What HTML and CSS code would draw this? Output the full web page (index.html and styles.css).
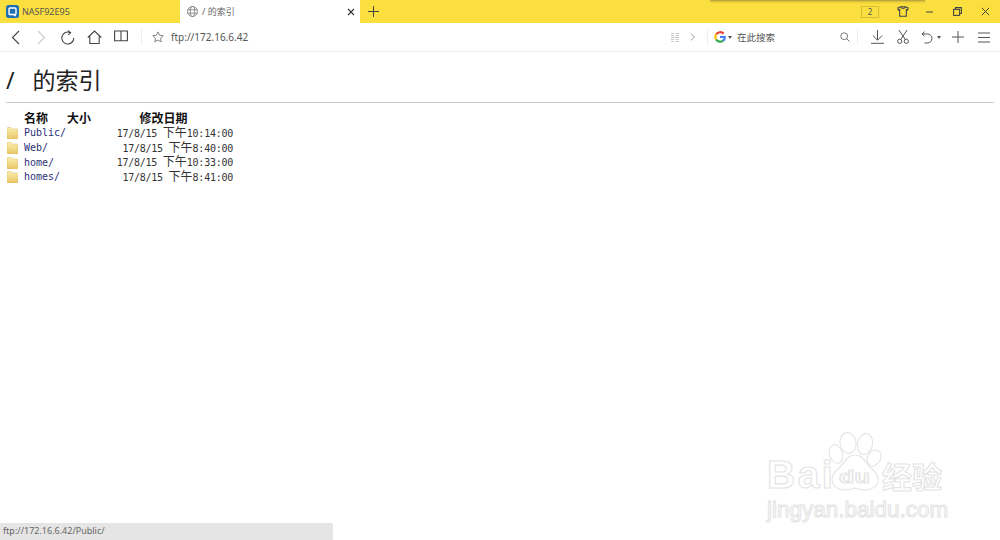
FILE: index.html
```html
<!DOCTYPE html>
<html lang="zh-CN">
<head>
<meta charset="utf-8">
<title>/ 的索引</title>
<link rel="stylesheet" href="styles.css">
</head>
<body>
<div class="shadow-strip"></div>
<header class="tabbar">
  <div class="tab">
    <svg class="tab-logo" width="13" height="13" viewBox="0 0 13 13"><rect width="13" height="13" rx="2.5" fill="#1f6fb5"/><rect x="3" y="3" width="7" height="6.5" rx="1" fill="none" stroke="#fff" stroke-width="1.4"/><path d="M7 9.5l3 1.5" stroke="#fff" stroke-width="1.2"/></svg>
    <span>NASF92E95</span>
  </div>
  <div class="tab tab-active">
    <svg width="11" height="11" viewBox="0 0 11 11" fill="none" stroke="#777" stroke-width=".8"><circle cx="5.5" cy="5.5" r="5"/><ellipse cx="5.5" cy="5.5" rx="2.2" ry="5"/><path d="M.6 3.8h9.8M.6 7.2h9.8"/></svg>
    <span class="tab-title">/ 的索引</span>
    <svg class="tab-close" width="8" height="8" viewBox="0 0 8 8" stroke="#333" stroke-width="1.1"><path d="M1 1l6 6M7 1L1 7"/></svg>
  </div>
  <div class="newtab"><svg width="11" height="11" viewBox="0 0 11 11" stroke="#444" stroke-width="1"><path d="M5.500 0v11M0 5.500h11"/></svg></div>
  <div class="winctl">
    <span class="count">2</span>
    <svg class="ctl-shirt" width="12" height="11" viewBox="0 0 12 11" fill="none" stroke="#444" stroke-width="1.100"><path d="M3.500.7h5L11.300 2 10.500 4 9.300 3.600V10.300H2.700V3.600L1.500 4 .7 2zM3.500.7C4 3 8 3 8.500.7"/></svg>
    <svg class="ctl" width="9" height="9" viewBox="0 0 9 9" stroke="#444"><path d="M1 5h7"/></svg>
    <svg class="ctl" width="9" height="9" viewBox="0 0 9 9" fill="none" stroke="#444" stroke-width="1.100"><rect x=".6" y="2.400" width="6" height="6" fill="#fbdf3f"/><path d="M2.500 2.200V.6H8.400V6.500H6.800"/></svg>
    <svg class="ctl ctl-last" width="9" height="9" viewBox="0 0 9 9" stroke="#444"><path d="M.8.8l7.400 7.400M8.200.8L.8 8.200"/></svg>
  </div>
</header>

<nav class="toolbar">
  <div class="nav-btns">
    <span class="slot"><svg width="9" height="15" viewBox="0 0 9 15" fill="none" stroke="#444" stroke-width="1.100"><path d="M8 1L1.500 7.500 8 14"/></svg></span>
    <span class="slot"><svg width="9" height="15" viewBox="0 0 9 15" fill="none" stroke="#ccc" stroke-width="1.100"><path d="M1 1l6.500 6.500L1 14"/></svg></span>
    <span class="slot"><svg width="14" height="15" viewBox="0 0 14 15" fill="none" stroke="#444" stroke-width="1.100"><path d="M9.200 2.500A6 6 0 1 0 12.800 8"/><path d="M6.700.6l2.900 2-2.400 2.300" /></svg></span>
    <span class="slot"><svg width="15" height="14" viewBox="0 0 15 14" fill="none" stroke="#444" stroke-width="1.100"><path d="M.8 7.500L7.500 1l6.700 6.500M2.800 6.500v7h9.400v-7"/></svg></span>
    <span class="slot"><svg width="14" height="12" viewBox="0 0 14 12" fill="none" stroke="#444" stroke-width="1.100"><path d="M.6 1H7V10.800H.6zM7 1h6.400V10.800H7z"/></svg></span>
  </div>
  <span class="divider"></span>
  <svg class="star" width="12" height="12" viewBox="0 0 12 12" fill="none" stroke="#777" stroke-width=".9"><path d="M6 .9l1.600 3.300 3.600.5-2.600 2.500.6 3.600L6 9.100l-3.200 1.700.6-3.600L.8 4.700l3.600-.5z"/></svg>
  <span class="url">ftp://172.16.6.42</span>

  <div class="tools">
    <svg class="qr" width="8" height="9" viewBox="0 0 8 9" fill="none" stroke="#bbb" stroke-width=".8"><path d="M0 .5h3.200M4.800 .5H8M0 2.500h3.200M4.800 2.500H8M0 4.500h8M0 6.500h3.200M4.800 6.500H8M0 8.500h3.200M4.800 8.500H8"/></svg>
    <svg class="chev" width="5" height="8" viewBox="0 0 5 8" fill="none" stroke="#999"><path d="M1 .6L4.300 4 1 7.400"/></svg>
    <span class="divider divider-search"></span>
    <svg class="google" width="12" height="12" viewBox="0 0 12 12" fill="none" stroke-width="2.200"><path d="M9.600 2.600A4.800 4.800 0 0 0 2.200 3.400" stroke="#e94235"/><path d="M2.200 3.400a4.800 4.800 0 0 0 0 5.200" stroke="#fabb05"/><path d="M2.200 8.600a4.800 4.800 0 0 0 7 1" stroke="#34a853"/><path d="M9.200 9.600C10.300 8.700 10.800 7.500 10.800 6H6" stroke="#4285f4"/></svg>
    <span class="caret"></span>
    <span class="search-text">在此搜索</span>
    <svg class="mag" width="10" height="10" viewBox="0 0 10 10" fill="none" stroke="#666" stroke-width=".9"><circle cx="4.200" cy="4.200" r="3.400"/><path d="M6.700 6.700L9.500 9.500"/></svg>
    <span class="divider divider-tools"></span>
    <svg class="t-down" width="13" height="14" viewBox="0 0 13 14" fill="none" stroke="#555" stroke-width="1"><path d="M6.500 0v10M1.800 5.500l4.700 4.700 4.700-4.700M0 13.300h13"/></svg>
    <svg class="t-cut" width="12" height="14" viewBox="0 0 12 14" fill="none" stroke="#555" stroke-width="1"><circle cx="2.700" cy="11.300" r="2.100"/><circle cx="9.300" cy="11.300" r="2.100"/><path d="M3.800 9.500L10 0M8.200 9.500L2 0"/></svg>
    <svg class="t-undo" width="12" height="13" viewBox="0 0 12 13" fill="none" stroke="#555" stroke-width="1"><path d="M1 3h5.500a4.500 4.500 0 0 1 0 9H3.500M3.500.6L1 3l2.500 2.400"/></svg>
    <span class="caret caret-undo"></span>
    <svg class="t-plus" width="12" height="12" viewBox="0 0 12 12" stroke="#555"><path d="M6 0v12M0 6h12"/></svg>
    <svg class="t-menu" width="12" height="11" viewBox="0 0 12 11" stroke="#555"><path d="M0 1h12M0 5.500h12M0 10h12"/></svg>
  </div>
</nav>

<main class="listing">
  <h1>/ 的索引</h1>
  <hr>
  <table>
    <colgroup><col class="w-name"><col class="w-size"><col class="w-date"></colgroup>
    <thead>
      <tr><th class="c-name">名称</th><th class="c-size">大小</th><th class="c-date">修改日期</th></tr>
    </thead>
    <tbody>
      <tr><td><div class="entry"><svg class="folder" width="11" height="12" viewBox="0 0 11 12"><use href="#fold"/></svg><a href="#">Public/</a></div></td><td></td><td class="c-date">17/8/15 <span class="cjk">下午</span>10:14:00</td></tr>
      <tr><td><div class="entry"><svg class="folder" width="11" height="12" viewBox="0 0 11 12"><use href="#fold"/></svg><a href="#">Web/</a></div></td><td></td><td class="c-date">17/8/15 <span class="cjk">下午</span>8:40:00</td></tr>
      <tr><td><div class="entry"><svg class="folder" width="11" height="12" viewBox="0 0 11 12"><use href="#fold"/></svg><a href="#">home/</a></div></td><td></td><td class="c-date">17/8/15 <span class="cjk">下午</span>10:33:00</td></tr>
      <tr><td><div class="entry"><svg class="folder" width="11" height="12" viewBox="0 0 11 12"><use href="#fold"/></svg><a href="#">homes/</a></div></td><td></td><td class="c-date">17/8/15 <span class="cjk">下午</span>8:41:00</td></tr>
    </tbody>
  </table>
</main>

<svg class="defs" width="0" height="0">
  <defs>
    <linearGradient id="fg" x1="0" y1="0" x2="0" y2="1"><stop offset="0" stop-color="#fbeeb0"/><stop offset="1" stop-color="#e9c565"/></linearGradient>
    <symbol id="fold" viewBox="0 0 11 12"><path d="M0 1.500Q0 .5 1 .5H4L5 2H10Q11 2 11 3V11Q11 12 10 12H1Q0 12 0 11z" fill="url(#fg)" stroke="#dcb95a" stroke-width=".5"/></symbol>
  </defs>
</svg>

<svg class="watermark" width="190" height="110" viewBox="0 0 190 110">
  <g fill="#fff" stroke="#e4e4e4" stroke-width="1.100">
    <ellipse cx="72" cy="32" rx="6.500" ry="9.500" transform="rotate(-20 72 32)"/>
    <ellipse cx="84" cy="21" rx="8" ry="10.500" transform="rotate(-8 84 21)"/>
    <ellipse cx="101" cy="22" rx="7.500" ry="10.500" transform="rotate(12 101 22)"/>
    <ellipse cx="110" cy="36" rx="6.500" ry="8.500" transform="rotate(30 110 36)"/>
    <path d="M91 33C99 33 101 40 106 45 113 51 116 57 113 62 109 69 99 69 91 66 83 69 73 69 69 62 66 56 70 50 76 45 81 40 83 33 91 33z"/>
    <text class="wm-bai" x="3" y="66">Bai</text>
    <text class="wm-du" transform="translate(75 61) scale(1.4 1)">du</text>
    <text class="wm-cn" x="118" y="66">经验</text>
    <text class="wm-url" x="3" y="95">jingyan.baidu.com</text>
  </g>
</svg>

<footer class="status">ftp://172.16.6.42/Public/</footer>
</body>
</html>
```
FILE: styles.css
```css
* { box-sizing: border-box; }
html, body { margin: 0; height: 540px; overflow: hidden; background: #fff; }
body { font-family: "Noto Sans", "Noto Sans CJK SC", sans-serif; color: #333; position: relative; }
svg { display: block; flex: none; }

.tabbar { display: flex; height: 23px; background: #fbdf3f; align-items: stretch; }
.tab { width: 180px; display: flex; align-items: center; font-size: 9px; color: #555; padding-left: 6px; gap: 3px; }
.tab-logo { margin-top: -1px; }
.tab-active { background: #fff; padding-left: 7px; gap: 4px; color: #666; }
.tab-title { flex: 1; }
.tab-close { margin-right: 5px; }
.newtab { width: 26px; display: flex; align-items: center; justify-content: center; }
.winctl { margin-left: auto; display: flex; align-items: center; }
.count { width: 18px; height: 12px; border: 1px solid #d9bd34; font-size: 8px; line-height: 10px; text-align: center; color: #555; margin-right: 18px; }
.ctl-shirt { margin-right: 16px; }
.ctl { margin-right: 19px; }
.ctl-last { margin-right: 10px; }

.toolbar { display: flex; align-items: center; height: 29px; border-bottom: 1px solid #eee; }
.nav-btns { display: flex; padding-left: 2px; width: 141px; }
.slot { width: 26.500px; display: flex; justify-content: center; }
.divider { width: 1px; height: 16px; background: #eee; }
.star { margin: 0 7px 0 10px; }
.url { font-size: 10px; color: #555; }
.tools { margin-left: auto; display: flex; align-items: center; }
.qr { margin-right: 11px; }
.chev { margin-right: 12px; }
.divider-search { margin-right: 6px; }
.caret { width: 0; height: 0; border: 2.500px solid transparent; border-top: 3px solid #555; border-bottom: 0; margin-left: 2px; }
.search-text { font-size: 9.500px; color: #555; margin-left: 5px; width: 103px; }
.mag { margin-right: 7px; }
.divider-tools { margin-right: 13px; }
.t-down { margin-right: 13px; }
.t-cut { margin-right: 12px; }
.caret-undo { margin-left: 4px; margin-right: 11px; }
.t-plus { margin-right: 14px; }
.t-menu { margin-right: 10px; }

.listing { padding: 0 6px; }
h1 { margin: 0; padding-top: 13px; font-size: 23px; line-height: 30px; font-weight: 400; word-spacing: 12px; color: #222; }
hr { border: 0; height: 1px; background: #ccc; margin: 7px 0 7px; }
table { border-collapse: collapse; table-layout: fixed; width: 227px; font-family: "DejaVu Sans Mono", monospace; font-size: 10px; color: #333; }
.w-name { width: 61px; }
.w-size { width: 24px; }
.w-date { width: 142px; }
th { font-family: "Noto Sans CJK SC", sans-serif; font-size: 12px; font-weight: 700; color: #111; padding: 0; line-height: 16px; }
td { padding: 0; height: 14.700px; line-height: 12px; white-space: nowrap; }
th.c-name { padding-left: 18px; text-align: left; }
td.c-date { padding-left: 20px; text-align: right; letter-spacing: -.25px; }
th.c-date { text-align: center; padding-left: 3px; }
.cjk { font-family: "Noto Sans CJK SC", sans-serif; font-size: 12px; line-height: 10px; letter-spacing: 0; }
.entry { display: flex; align-items: center; gap: 6px; padding-left: 1px; }
a { color: #2b2f78; text-decoration: none; }

.defs { position: absolute; }
.shadow-strip { position: absolute; left: 710px; top: 0; width: 215px; height: 1px; background: #b9a640; box-shadow: 0 1px 2px rgba(90,80,20,.4); }
.watermark { position: absolute; left: 764px; top: 422px; }
.wm-bai { font-family: "Liberation Sans", sans-serif; font-size: 39px; font-weight: 700; letter-spacing: 2.500px; }
.wm-du { font-family: "Liberation Sans", sans-serif; font-size: 18px; font-weight: 700; }
.wm-cn { font-family: "Noto Sans CJK SC", sans-serif; font-size: 30px; font-weight: 700; }
.wm-url { font-family: "Liberation Sans", sans-serif; font-size: 22.500px; }
.status { position: absolute; left: 0; bottom: 0; width: 333px; height: 17px; padding-left: 3px; background: #e5e5e5; border-top-right-radius: 2px; font-size: 9px; line-height: 15px; color: #666; }
```
